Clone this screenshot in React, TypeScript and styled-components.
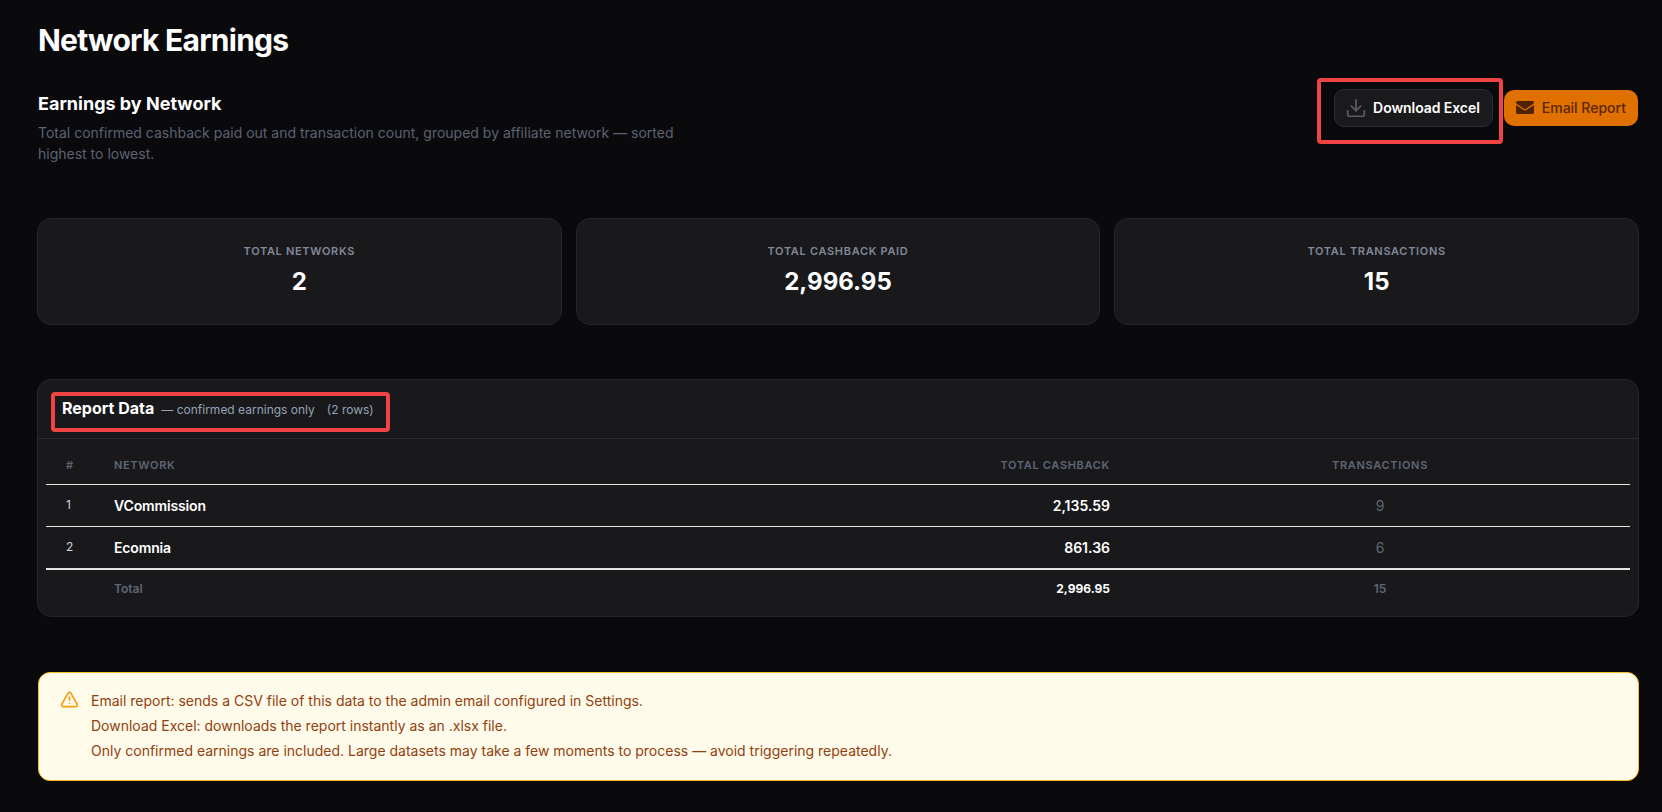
import * as React from "react";
import styled, { createGlobalStyle } from "styled-components";

const GlobalStyle = createGlobalStyle`
  html, body {
    margin: 0;
    padding: 0;
    background: #0a0a0d;
    font-family: Inter, "Liberation Sans", sans-serif;
  }
`;

const Page = styled.div`
  box-sizing: border-box;
  width: 1662px;
  height: 812px;
  padding: 20px 23px 0 37px;
  overflow: hidden;
  background: #0a0a0d;
`;

const PageTitle = styled.h1`
  margin: 0 0 0 1px;
  font-size: 30px;
  line-height: 40px;
  font-weight: 700;
  letter-spacing: -0.75px;
  color: #ffffff;
`;

const ReportHeader = styled.div`
  display: flex;
  justify-content: space-between;
  align-items: flex-start;
  margin-top: 30px;
`;

const HeaderText = styled.div`
  width: 640px;
  margin-left: 1px;
`;

const SectionTitle = styled.h2`
  margin: 1px 0 5px;
  font-size: 18px;
  line-height: 26px;
  font-weight: 700;
  color: #ffffff;
`;

const Description = styled.p`
  margin: 0;
  font-size: 14px;
  line-height: 21px;
  color: #5b6272;
`;

const Actions = styled.div`
  display: flex;
  align-items: center;
  gap: 11px;
  margin: -1px 1px 0 0;
`;

const Marked = styled.div<{ $top: number; $right: number; $bottom: number; $left: number }>`
  position: relative;
  display: flex;
  align-items: baseline;
  &::after {
    content: "";
    position: absolute;
    top: ${(p) => -p.$top}px;
    right: ${(p) => -p.$right}px;
    bottom: ${(p) => -p.$bottom}px;
    left: ${(p) => -p.$left}px;
    border: 4px solid #ef4444;
    border-radius: 4px;
    pointer-events: none;
  }
`;

const ActionButton = styled.button<{ $primary?: boolean }>`
  display: inline-flex;
  align-items: center;
  gap: ${(p) => (p.$primary ? 8 : 6)}px;
  box-sizing: border-box;
  height: ${(p) => (p.$primary ? 36 : 38)}px;
  padding: ${(p) => (p.$primary ? "0 12px 1px" : "0 12px 1px 10px")};
  border: ${(p) => (p.$primary ? "none" : "1px solid #2e2e33")};
  border-radius: 10px;
  background: ${(p) => (p.$primary ? "#e07000" : "#1a1a1d")};
  color: ${(p) => (p.$primary ? "#5a2600" : "#ffffff")};
  font-family: inherit;
  font-size: 14px;
  font-weight: ${(p) => (p.$primary ? 500 : 600)};
  letter-spacing: ${(p) => (p.$primary ? "0" : "-0.07px")};
  cursor: pointer;
`;

const StatGrid = styled.div`
  display: grid;
  grid-template-columns: repeat(3, 1fr);
  gap: 14px;
  margin-top: 54px;
`;

const StatCard = styled.div`
  box-sizing: border-box;
  height: 107px;
  padding-top: 24px;
  border: 1px solid #26262a;
  border-radius: 14px;
  background: #19191c;
  text-align: center;
`;

const StatLabel = styled.div`
  font-size: 11px;
  line-height: 16px;
  font-weight: 600;
  letter-spacing: 0.68px;
  text-transform: uppercase;
  color: #808899;
`;

const StatValue = styled.div`
  margin-top: 7px;
  font-size: 24px;
  line-height: 32px;
  font-weight: 700;
  color: #ffffff;
`;

const Panel = styled.section`
  box-sizing: border-box;
  height: 238px;
  margin-top: 54px;
  border: 1px solid #26262a;
  border-radius: 14px;
  background: #19191c;
`;

const PanelHeader = styled.div`
  display: flex;
  align-items: center;
  box-sizing: border-box;
  height: 59px;
  padding: 0 24px 2px;
  border-bottom: 1px solid #2a2a2e;
`;

const PanelTitle = styled.span`
  font-size: 16px;
  font-weight: 700;
  color: #ffffff;
`;

const PanelNote = styled.span`
  margin-left: 7px;
  font-size: 12px;
  color: #94a3b8;
`;

const PanelCount = styled.span`
  margin-left: 12px;
  font-size: 12px;
  color: #94a3b8;
`;

const TableWrap = styled.div`
  padding: 0 8px;
`;

const Row = styled.div<{ $height: number; $rule: number }>`
  display: grid;
  grid-template-columns: 48px 1fr 501px 500px;
  align-items: center;
  box-sizing: border-box;
  height: ${(p) => p.$height}px;
  border-bottom: ${(p) => p.$rule}px solid #e5e5e5;
`;

const HeadRow = styled(Row)`
  padding-top: 6px;
`;

const Cell = styled.div<{ $align?: "left" | "right" | "center" }>`
  padding: 0 20px;
  text-align: ${(p) => p.$align || "left"};
  white-space: nowrap;
`;

const HeadCell = styled(Cell)`
  font-size: 11px;
  font-weight: 600;
  letter-spacing: 0.68px;
  text-transform: uppercase;
  color: #5f6676;
`;

const IndexCell = styled(Cell)`
  margin-top: -2px;
  font-size: 12px;
  color: #cbd5e1;
`;

const NameCell = styled(Cell)`
  font-size: 14px;
  font-weight: 600;
  letter-spacing: -0.15px;
  color: #ffffff;
`;

const AmountCell = styled(Cell)`
  font-size: 14px;
  font-weight: 600;
  color: #ffffff;
`;

const CountCell = styled(Cell)`
  font-size: 14px;
  color: #5f6676;
`;

const TotalLabel = styled(Cell)`
  font-size: 12px;
  font-weight: 600;
  color: #5f6676;
`;

const TotalAmount = styled(Cell)`
  font-size: 12px;
  font-weight: 700;
  color: #ffffff;
`;

const TotalCount = styled(Cell)`
  font-size: 12px;
  font-weight: 600;
  color: #5f6676;
`;

const Notice = styled.div`
  display: flex;
  gap: 12px;
  box-sizing: border-box;
  height: 109px;
  margin: 55px 0 0 1px;
  padding: 15px 22px 15px 21px;
  border: 1px solid #fbbf24;
  border-radius: 12px;
  background: #fffbeb;
  color: #92400e;
  font-size: 14px;
  line-height: 25px;
`;

const NoticeIcon = styled.svg`
  flex: none;
  width: 19px;
  height: 19px;
  margin-top: 2px;
  color: #f59e0b;
`;

const NoticeLine = styled.div``;

const rows = [
  { id: 1, name: "VCommission", cashback: "2,135.59", transactions: 9 },
  { id: 2, name: "Ecomnia", cashback: "861.36", transactions: 6 },
];

function DownloadIcon() {
  return (
    <svg width="22" height="22" viewBox="0 0 24 24" fill="none" stroke="#5c5c64" strokeWidth="1.9" strokeLinecap="round" strokeLinejoin="round">
      <path d="M12 3v12" />
      <path d="M7 10l5 5 5-5" />
      <path d="M3 15v4a2 2 0 0 0 2 2h14a2 2 0 0 0 2-2v-4" />
    </svg>
  );
}

function MailIcon() {
  return (
    <svg width="18" height="13" viewBox="0 0 18 14" fill="#4f2200" preserveAspectRatio="none">
      <path d="M1.6 0h14.8C17.3 0 18 .7 18 1.6c0 .5-.3 1-.7 1.3L9.7 8.500c-.4.3-1 .3-1.4 0L.7 2.900C.3 2.600 0 2.100 0 1.600 0 .7.700 0 1.600 0z" />
      <path d="M0 4.200l7.600 5.600c.8.600 2 .600 2.800 0L18 4.200V12c0 1.100-.9 2-2 2H2c-1.100 0-2-.9-2-2V4.200z" />
    </svg>
  );
}

export default function App() {
  return (
    <Page>
      <GlobalStyle />
      <PageTitle>Network Earnings</PageTitle>

      <ReportHeader>
        <HeaderText>
          <SectionTitle>Earnings by Network</SectionTitle>
          <Description>
            Total confirmed cashback paid out and transaction count, grouped by affiliate network — sorted highest to lowest.
          </Description>
        </HeaderText>
        <Actions>
          <Marked $top={11} $right={10} $bottom={17} $left={17}>
            <ActionButton>
              <DownloadIcon />
              Download Excel
            </ActionButton>
          </Marked>
          <ActionButton $primary>
            <MailIcon />
            Email Report
          </ActionButton>
        </Actions>
      </ReportHeader>

      <StatGrid>
        <StatCard>
          <StatLabel>Total Networks</StatLabel>
          <StatValue>2</StatValue>
        </StatCard>
        <StatCard>
          <StatLabel>Total Cashback Paid</StatLabel>
          <StatValue>2,996.95</StatValue>
        </StatCard>
        <StatCard>
          <StatLabel>Total Transactions</StatLabel>
          <StatValue>15</StatValue>
        </StatCard>
      </StatGrid>

      <Panel>
        <PanelHeader>
          <Marked $top={6} $right={16} $bottom={14} $left={11}>
            <PanelTitle>Report Data</PanelTitle>
            <PanelNote>— confirmed earnings only</PanelNote>
            <PanelCount>(2 rows)</PanelCount>
          </Marked>
        </PanelHeader>
        <TableWrap>
          <HeadRow $height={46} $rule={1}>
            <HeadCell>#</HeadCell>
            <HeadCell>Network</HeadCell>
            <HeadCell $align="right">Total Cashback</HeadCell>
            <HeadCell $align="center">Transactions</HeadCell>
          </HeadRow>
          {rows.map((row) => (
            <Row key={row.id} $height={row.id === 2 ? 43 : 42} $rule={row.id === 2 ? 2 : 1}>
              <IndexCell>{row.id}</IndexCell>
              <NameCell>{row.name}</NameCell>
              <AmountCell $align="right">{row.cashback}</AmountCell>
              <CountCell $align="center">{row.transactions}</CountCell>
            </Row>
          ))}
          <Row $height={37} $rule={0}>
            <Cell />
            <TotalLabel>Total</TotalLabel>
            <TotalAmount $align="right">2,996.95</TotalAmount>
            <TotalCount $align="center">15</TotalCount>
          </Row>
        </TableWrap>
      </Panel>

      <Notice>
        <NoticeIcon viewBox="0 0 24 24" fill="none" stroke="currentColor" strokeWidth="2" strokeLinecap="round" strokeLinejoin="round">
          <path d="M21.73 18l-8-14a2 2 0 0 0-3.48 0l-8 14A2 2 0 0 0 4 21h16a2 2 0 0 0 1.73-3" />
          <path d="M12 9v4" />
          <path d="M12 17h.01" />
        </NoticeIcon>
        <div>
          <NoticeLine>Email report: sends a CSV file of this data to the admin email configured in Settings.</NoticeLine>
          <NoticeLine>Download Excel: downloads the report instantly as an .xlsx file.</NoticeLine>
          <NoticeLine>Only confirmed earnings are included. Large datasets may take a few moments to process — avoid triggering repeatedly.</NoticeLine>
        </div>
      </Notice>
    </Page>
  );
}
